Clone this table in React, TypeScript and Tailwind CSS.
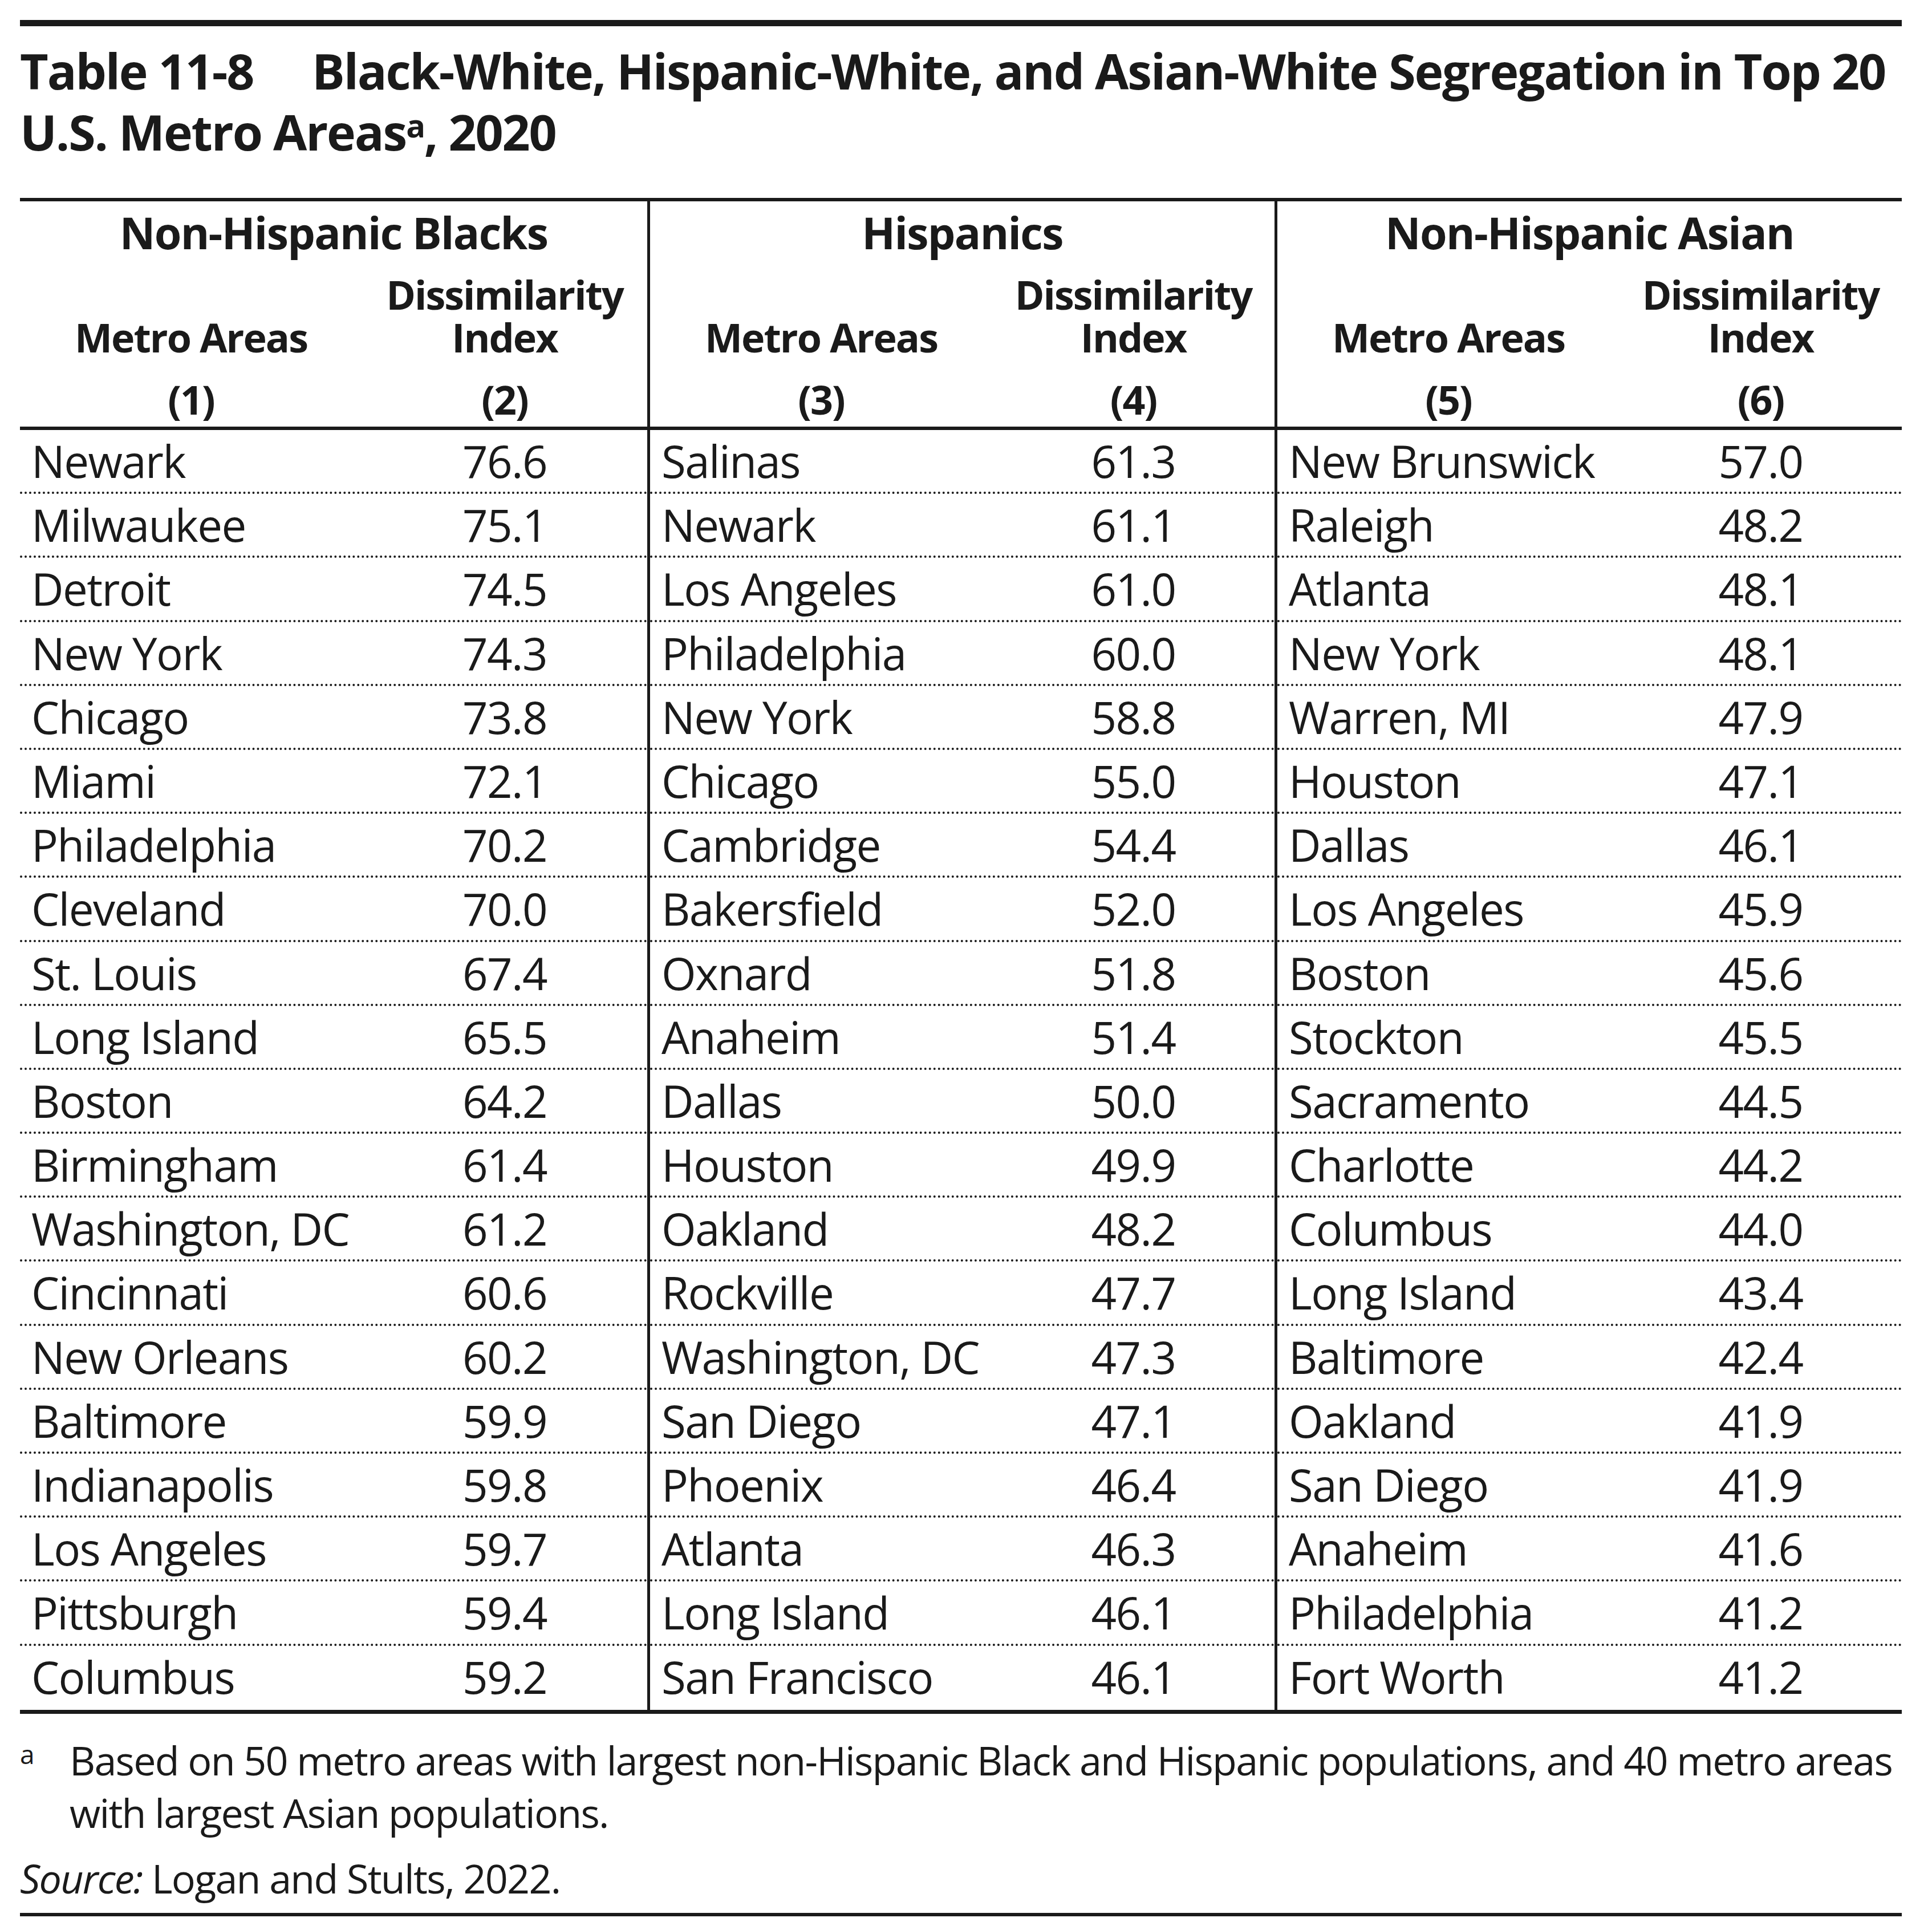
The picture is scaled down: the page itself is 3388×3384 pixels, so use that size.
import React from "react";

type Row = [string, string];
type Group = { title: string; cols: [string, string]; rows: Row[] };

const groups: Group[] = [
  {
    title: "Non-Hispanic Blacks",
    cols: ["(1)", "(2)"],
    rows: [
      ["Newark", "76.6"],
      ["Milwaukee", "75.1"],
      ["Detroit", "74.5"],
      ["New York", "74.3"],
      ["Chicago", "73.8"],
      ["Miami", "72.1"],
      ["Philadelphia", "70.2"],
      ["Cleveland", "70.0"],
      ["St. Louis", "67.4"],
      ["Long Island", "65.5"],
      ["Boston", "64.2"],
      ["Birmingham", "61.4"],
      ["Washington, DC", "61.2"],
      ["Cincinnati", "60.6"],
      ["New Orleans", "60.2"],
      ["Baltimore", "59.9"],
      ["Indianapolis", "59.8"],
      ["Los Angeles", "59.7"],
      ["Pittsburgh", "59.4"],
      ["Columbus", "59.2"],
    ],
  },
  {
    title: "Hispanics",
    cols: ["(3)", "(4)"],
    rows: [
      ["Salinas", "61.3"],
      ["Newark", "61.1"],
      ["Los Angeles", "61.0"],
      ["Philadelphia", "60.0"],
      ["New York", "58.8"],
      ["Chicago", "55.0"],
      ["Cambridge", "54.4"],
      ["Bakersfield", "52.0"],
      ["Oxnard", "51.8"],
      ["Anaheim", "51.4"],
      ["Dallas", "50.0"],
      ["Houston", "49.9"],
      ["Oakland", "48.2"],
      ["Rockville", "47.7"],
      ["Washington, DC", "47.3"],
      ["San Diego", "47.1"],
      ["Phoenix", "46.4"],
      ["Atlanta", "46.3"],
      ["Long Island", "46.1"],
      ["San Francisco", "46.1"],
    ],
  },
  {
    title: "Non-Hispanic Asian",
    cols: ["(5)", "(6)"],
    rows: [
      ["New Brunswick", "57.0"],
      ["Raleigh", "48.2"],
      ["Atlanta", "48.1"],
      ["New York", "48.1"],
      ["Warren, MI", "47.9"],
      ["Houston", "47.1"],
      ["Dallas", "46.1"],
      ["Los Angeles", "45.9"],
      ["Boston", "45.6"],
      ["Stockton", "45.5"],
      ["Sacramento", "44.5"],
      ["Charlotte", "44.2"],
      ["Columbus", "44.0"],
      ["Long Island", "43.4"],
      ["Baltimore", "42.4"],
      ["Oakland", "41.9"],
      ["San Diego", "41.9"],
      ["Anaheim", "41.6"],
      ["Philadelphia", "41.2"],
      ["Fort Worth", "41.2"],
    ],
  },
];

function GroupColumn({ g, first }: { g: Group; first: boolean }) {
  return (
    <div
      className={
        first
          ? "flex flex-col"
          : "flex flex-col border-l-[5px] border-solid border-[#1a1a1a]"
      }
    >
      <div className="pt-[10px] pb-[10px] border-b-[6px] border-solid border-[#1a1a1a] font-bold">
        <div className="text-center text-[77px] leading-[90px] tracking-[-0.022em] whitespace-nowrap">
          {g.title}
        </div>
        <div className="mt-[26px] flex items-end text-[70px] leading-[75px] tracking-[-0.028em]">
          <div className="w-[600px] text-center whitespace-nowrap">Metro Areas</div>
          <div className="flex-1 text-center">
            Dissimilarity
            <br />
            Index
          </div>
        </div>
        <div className="mt-[34px] flex text-[70px] leading-[75px] tracking-[-0.028em]">
          <div className="w-[600px] text-center">{g.cols[0]}</div>
          <div className="flex-1 text-center">{g.cols[1]}</div>
        </div>
      </div>
      {g.rows.map((r, i) => (
        <div
          key={i}
          className={
            i < g.rows.length - 1
              ? "flex h-[112.2px] border-b-4 border-dotted border-[#1a1a1a] text-[78px] leading-[108px] tracking-[-0.02em]"
              : "flex h-[112.2px] text-[78px] leading-[108px] tracking-[-0.02em]"
          }
        >
          <div className="w-[600px] pl-[20px] whitespace-nowrap">{r[0]}</div>
          <div className="flex-1 text-center">{r[1]}</div>
        </div>
      ))}
    </div>
  );
}

export default function App() {
  return (
    <div className="w-[3388px] h-[3384px] bg-white text-[#1a1a1a] font-['Open_Sans',sans-serif] overflow-hidden">
      <div className="ml-[35px] w-[3300px] pt-[35px]">
        <div className="h-[11px] bg-[#1a1a1a]" />
        <div className="mt-[24px] text-[86px] leading-[107px] font-bold tracking-[-0.025em] whitespace-nowrap">
          <span className="inline-block w-[512px]">Table 11-8</span>
          Black-White, Hispanic-White, and Asian-White Segregation in Top 20
          <br />
          U.S. Metro Areas
          <span className="text-[56px] leading-none align-[23px]">a</span>, 2020
        </div>
        <div className="mt-[63px] grid grid-cols-3 border-t-[6px] border-b-[7px] border-solid border-[#1a1a1a]">
          {groups.map((g, i) => (
            <GroupColumn key={i} g={g} first={i === 0} />
          ))}
        </div>
        <div className="mt-[35px] flex text-[70px] leading-[92px] tracking-[-0.025em]">
          <div className="w-[87px] shrink-0">
            <span className="text-[46px] leading-none align-[20px]">a</span>
          </div>
          <div className="whitespace-nowrap">
            Based on 50 metro areas with largest non-Hispanic Black and Hispanic populations, and 40 metro areas
            <br />
            with largest Asian populations.
          </div>
        </div>
        <div className="mt-[23px] text-[70px] leading-[92px] tracking-[-0.025em] whitespace-nowrap">
          <span className="italic">Source:</span> Logan and Stults, 2022.
        </div>
        <div className="mt-[15px] h-[6px] bg-[#1a1a1a]" />
      </div>
    </div>
  );
}
